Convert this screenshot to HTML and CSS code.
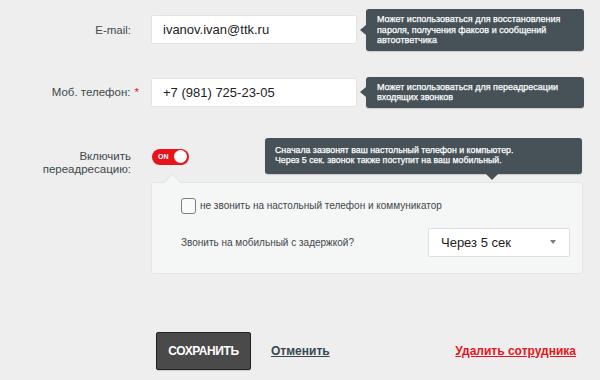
FILE: index.html
```html
<!DOCTYPE html>
<html lang="ru">
<head>
<meta charset="utf-8">
<title>Сотрудник</title>
<link rel="stylesheet" href="styles.css">
</head>
<body>
<main class="form">
  <div class="row row-email">
    <label class="label">E-mail:</label>
    <div class="field">
      <div class="input">ivanov.ivan@ttk.ru</div>
      <div class="tip tip-left">Может использоваться для восстановления<br>пароля, получения факсов и сообщений<br>автоответчика</div>
    </div>
  </div>
  <div class="row row-phone">
    <label class="label">Моб. телефон:<span class="req">*</span></label>
    <div class="field">
      <div class="input">+7 (981) 725-23-05</div>
      <div class="tip tip-left">Может использоваться для переадресации<br>входящих звонков</div>
    </div>
  </div>
  <div class="row row-forward">
    <label class="label label-top">Включить<br>переадресацию:</label>
    <div class="field-col">
      <div class="toggle"><span class="toggle-text">ON</span><span class="knob"></span></div>
      <div class="tip tip-down">Сначала зазвонят ваш настольный телефон и компьютер.<br>Через 5 сек. звонок также поступит на ваш мобильный.</div>
      <div class="panel">
        <div class="check-row">
          <span class="checkbox"></span>
          <span class="check-label">не звонить на настольный телефон и коммуникатор</span>
        </div>
        <div class="delay-row">
          <span class="delay-label">Звонить на мобильный с задержкой?</span>
          <div class="select"><span>Через 5 сек</span><span class="caret"></span></div>
        </div>
      </div>
    </div>
  </div>
  <div class="actions">
    <button class="btn-save">СОХРАНИТЬ</button>
    <a class="link-cancel" href="#">Отменить</a>
    <a class="link-delete" href="#">Удалить сотрудника</a>
  </div>
</main>
</body>
</html>
```

FILE: styles.css
```css
* { box-sizing: border-box; }
html, body { margin: 0; padding: 0; }
body {
  background: #eeeeee;
  font-family: "Liberation Sans", Arial, sans-serif;
  color: #3f4649;
  width: 600px;
  height: 380px;
  overflow: hidden;
}
.form {
  padding-top: 9px;
}
.row {
  display: grid;
  grid-template-columns: 131px 1fr;
  column-gap: 20px;
  align-items: center;
}
.row-phone { margin-top: 26px; }
.row-forward { margin-top: 41px; align-items: start; }
.label {
  text-align: right;
  font-size: 11.5px;
  color: #40484c;
  white-space: nowrap;
}
.label-top {
  line-height: 13px;
  padding-top: 1px;
}
.req {
  color: #e8141b;
  margin-left: 4px;
  margin-right: -8px;
}
.field {
  display: flex;
  align-items: center;
}
.input {
  width: 206px;
  height: 29px;
  background: #fff;
  border: 1px solid #e3e3e3;
  border-radius: 2px;
  padding-left: 11px;
  font-size: 13px;
  line-height: 27px;
  color: #222;
}
.tip {
  position: relative;
  background: #465258;
  color: #fff;
  font-size: 9px;
  line-height: 10.5px;
  border-radius: 3px;
  -webkit-text-stroke: 0.25px #fff;
  box-shadow: 0 1px 1px rgba(0,0,0,0.15);
}
.tip-left {
  margin-left: 9px;
  width: 218px;
  padding: 5px 8px 5px 11px;
}
.tip-left::before {
  content: "";
  position: absolute;
  left: -6px;
  top: 50%;
  margin-top: -5px;
  border-style: solid;
  border-width: 5px 6px 5px 0;
  border-color: transparent #465258 transparent transparent;
}
.field-col {
  position: relative;
  width: 432px;
}
.toggle {
  position: relative;
  width: 37px;
  height: 16px;
  margin-left: 1px;
  background: #e8141b;
  border-radius: 8px;
  display: flex;
  align-items: center;
}
.toggle-text {
  color: #fff;
  font-size: 7px;
  font-weight: bold;
  margin-left: 6px;
}
.knob {
  position: absolute;
  right: 2px;
  top: 1.5px;
  width: 13px;
  height: 13px;
  border-radius: 50%;
  background: #fff;
}
.tip-down {
  position: absolute;
  left: 114px;
  top: -11px;
  width: 317px;
  height: 36px;
  padding: 7px 10px 0 10px;
  font-size: 8.8px;
}
.tip-down::after {
  content: "";
  position: absolute;
  left: 221px;
  bottom: -6px;
  border-style: solid;
  border-width: 6px 6px 0 6px;
  border-color: #465258 transparent transparent transparent;
}
.panel {
  position: relative;
  margin-top: 17px;
  background: #f5f6f6;
  border: 1px solid #e3e4e4;
  border-radius: 3px;
  padding: 15px 12px 16px 29px;
}
.panel::before {
  content: "";
  position: absolute;
  left: 14px;
  top: -7px;
  width: 12px;
  height: 12px;
  background: #f5f6f6;
  border-top: 1px solid #e3e4e4;
  border-left: 1px solid #e3e4e4;
  transform: rotate(45deg);
}
.check-row {
  display: flex;
  align-items: center;
  gap: 4px;
}
.checkbox {
  width: 15px;
  height: 16px;
  border: 1px solid #7a7f82;
  border-radius: 3px;
  background: #fafafa;
}
.check-label, .delay-label {
  font-size: 10px;
  color: #3e474c;
}
.delay-row {
  margin-top: 14px;
  display: flex;
  align-items: center;
  justify-content: space-between;
}
.select {
  width: 142px;
  height: 29px;
  background: #fff;
  border: 1px solid #dedede;
  border-radius: 2px;
  display: flex;
  align-items: center;
  justify-content: space-between;
  padding: 0 13px 0 12px;
  font-size: 13px;
  color: #222;
}
.caret {
  width: 0;
  height: 0;
  border-style: solid;
  border-width: 4px 3.5px 0 3.5px;
  border-color: #7b7b7b transparent transparent transparent;
}
.actions {
  margin-top: 58px;
  display: flex;
  align-items: center;
  padding-left: 156px;
  padding-right: 24px;
}
.btn-save {
  width: 95px;
  height: 38px;
  background: #4a4a4a;
  border: 1px solid #222;
  border-radius: 2px;
  color: #fff;
  font-family: "Liberation Sans", Arial, sans-serif;
  font-size: 12px;
  font-weight: bold;
  letter-spacing: -0.4px;
  box-shadow: 0 1px 1px rgba(0,0,0,0.15);
  padding: 0;
}
.link-cancel {
  margin-left: 20px;
  font-size: 12px;
  font-weight: bold;
  color: #36474f;
  text-decoration: underline;
}
.link-delete {
  margin-left: auto;
  font-size: 12px;
  font-weight: bold;
  color: #e8141b;
  text-decoration: underline;
}
```
